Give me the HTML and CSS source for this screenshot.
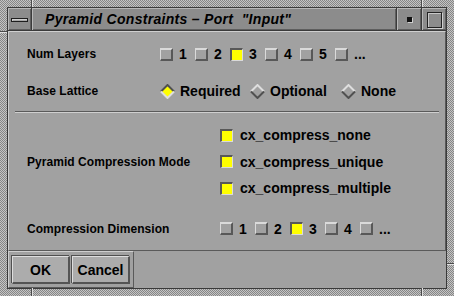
FILE: index.html
```
<!DOCTYPE html>
<html>
<head>
<meta charset="utf-8">
<link rel="stylesheet" href="styles.css">
</head>
<body>
<div class="window">
  <div class="titlebar">
    <div class="tb-menu"><span class="tb-bar"></span></div>
    <div class="tb-title">Pyramid Constraints – Port&nbsp; "Input"</div>
    <div class="tb-min"><span class="tb-dot"></span></div>
    <div class="tb-max"><span class="tb-sq"></span></div>
  </div>
  <div class="client">
    <div class="panel">
      <div class="section one">
        <div class="label">Num Layers</div>
        <div class="checks">
          <span class="ci"><span class="cb"></span><span class="ct">1</span></span>
          <span class="ci"><span class="cb"></span><span class="ct">2</span></span>
          <span class="ci"><span class="cb on"></span><span class="ct">3</span></span>
          <span class="ci"><span class="cb"></span><span class="ct">4</span></span>
          <span class="ci"><span class="cb"></span><span class="ct">5</span></span>
          <span class="ci"><span class="cb"></span><span class="ct">...</span></span>
        </div>
        <div class="label">Base Lattice</div>
        <div class="radios">
          <span class="ri"><svg class="dia" width="15" height="15" viewBox="0 0 15 15"><polygon points="7.5,1.5 13.5,7.5 7.5,13.5 1.5,7.5" fill="#ffff00"/><polyline points="1,7.5 7.5,1 14,7.5" stroke="#505050" stroke-width="2" fill="none"/><polyline points="1,7.5 7.5,14 14,7.5" stroke="#dedede" stroke-width="2" fill="none"/></svg><span class="rt">Required</span></span>
          <span class="ri"><svg class="dia" width="15" height="15" viewBox="0 0 15 15"><polygon points="7.5,1.5 13.5,7.5 7.5,13.5 1.5,7.5" fill="#a1a1a1"/><polyline points="1,7.5 7.5,1 14,7.5" stroke="#dedede" stroke-width="2" fill="none"/><polyline points="1,7.5 7.5,14 14,7.5" stroke="#505050" stroke-width="2" fill="none"/></svg><span class="rt">Optional</span></span>
          <span class="ri"><svg class="dia" width="15" height="15" viewBox="0 0 15 15"><polygon points="7.5,1.5 13.5,7.5 7.5,13.5 1.5,7.5" fill="#a1a1a1"/><polyline points="1,7.5 7.5,1 14,7.5" stroke="#dedede" stroke-width="2" fill="none"/><polyline points="1,7.5 7.5,14 14,7.5" stroke="#505050" stroke-width="2" fill="none"/></svg><span class="rt">None</span></span>
        </div>
      </div>
      <div class="sep"></div>
      <div class="section two">
        <div class="label">Pyramid Compression Mode</div>
        <div class="modes">
          <span class="mi"><span class="cb on"></span><span class="mt">cx_compress_none</span></span>
          <span class="mi"><span class="cb on"></span><span class="mt">cx_compress_unique</span></span>
          <span class="mi"><span class="cb on"></span><span class="mt">cx_compress_multiple</span></span>
        </div>
        <div class="label dim">Compression Dimension</div>
        <div class="checks dim">
          <span class="ci"><span class="cb"></span><span class="ct">1</span></span>
          <span class="ci"><span class="cb"></span><span class="ct">2</span></span>
          <span class="ci"><span class="cb on"></span><span class="ct">3</span></span>
          <span class="ci"><span class="cb"></span><span class="ct">4</span></span>
          <span class="ci"><span class="cb"></span><span class="ct">...</span></span>
        </div>
      </div>
    </div>
    <div class="buttonbar">
      <div class="btnbox">
        <button class="btn">OK</button>
        <button class="btn">Cancel</button>
      </div>
    </div>
  </div>
  <span class="notch nt-l"></span>
  <span class="notch nt-r"></span>
  <span class="notch nb-l"></span>
  <span class="notch nb-r"></span>
  <span class="notch nl-t"></span>
  <span class="notch nr-b"></span>
</div>
</body>
</html>
```
FILE: styles.css
```
* { box-sizing: border-box; }
html, body { margin: 0; padding: 0; }
body {
  width: 454px;
  height: 296px;
  font-family: "Liberation Sans", Arial, sans-serif;
  color: #000;
}
.window {
  position: relative;
  width: 454px;
  height: 296px;
  padding: 7px 7px 8px 7px;
  display: flex;
  flex-direction: column;
  background-color: #a4a4a4;
  background-image: repeating-conic-gradient(#c4c4c4 0 25%, #868686 0 50%);
  background-size: 2px 2px;
}
.titlebar {
  height: 24px;
  display: flex;
  background: #8c8c8c;
  border: 1px solid #3a3a3a;
}
.tb-menu {
  width: 24px;
  border-right: 1px solid #3a3a3a;
  box-shadow: inset 1px 1px 0 #b8b8b8, inset -1px -1px 0 #5e5e5e;
  display: flex;
  align-items: center;
  justify-content: center;
}
.tb-bar {
  width: 17px;
  height: 4px;
  border: 1px solid #1e1e1e;
  background: #a8a8a8;
  box-shadow: inset 1px 1px 0 #d0d0d0;
  margin-top: 1px;
}
.tb-title {
  flex: 1;
  padding-left: 13px;
  font-style: italic;
  font-weight: bold;
  font-size: 14px;
  letter-spacing: 0.3px;
  line-height: 22px;
  box-shadow: inset 1px 1px 0 #b8b8b8, inset -1px -1px 0 #5e5e5e;
  white-space: pre;
}
.tb-min, .tb-max {
  width: 25px;
  border-left: 1px solid #3a3a3a;
  box-shadow: inset 1px 1px 0 #b8b8b8, inset -1px -1px 0 #5e5e5e;
  display: flex;
  align-items: center;
  justify-content: center;
}
.tb-dot {
  width: 5px;
  height: 5px;
  background: #111;
  box-shadow: 1px 1px 0 #cfcfcf;
  margin-top: 1px;
}
.tb-sq {
  width: 15px;
  height: 16px;
  border: 1px solid #222;
  box-shadow: inset 1px 1px 0 #c8c8c8, 1px 1px 0 #cfcfcf;
  background: #8c8c8c;
  margin-top: 1px;
}
.client {
  flex: 1;
  display: flex;
  flex-direction: column;
  border: 1px solid #3a3a3a;
  border-top: none;
  background: #a1a1a1;
}
.panel {
  height: 220px;
  border-style: solid;
  border-width: 1px;
  border-color: #cfcfcf #5a5a5a #5a5a5a #cfcfcf;
}
.section {
  display: grid;
  padding-left: 18px;
  align-items: center;
}
.section.one {
  grid-template-columns: 133px auto;
  grid-template-rows: 24px 24px;
  row-gap: 13px;
  padding-top: 10px;
}
.section.two {
  grid-template-columns: 193px auto;
  padding-top: 9px;
}
.label {
  font-size: 12px;
  font-weight: bold;
  letter-spacing: 0.05px;
}
.label.dim, .checks.dim { margin-top: 15px; height: 24px; display: flex; align-items: center; }
.checks { display: flex; align-items: center; }
.ci {
  display: flex;
  align-items: center;
  width: 35px;
}
.cb {
  display: inline-block;
  width: 13px;
  height: 13px;
  border-style: solid;
  border-width: 2px 2px 2px 1px;
  border-color: #dadada #585858 #585858 #dadada;
  background: #a1a1a1;
  flex: none;
}
.cb.on {
  border-width: 2px 1px 1px 2px;
  border-color: #585858 #dadada #dadada #585858;
  background: #ffff00;
}
.ct {
  margin-left: 6px;
  font-size: 14px;
  font-weight: bold;
}
.radios {
  display: grid;
  grid-template-columns: 90px 91px auto;
  align-items: center;
}
.ri { display: flex; align-items: center; }
.dia { flex: none; }
.rt {
  margin-left: 5px;
  font-size: 14px;
  font-weight: bold;
}
.sep {
  height: 2px;
  margin: 8px 6px 0 6px;
  border-top: 1px solid #5a5a5a;
  border-bottom: 1px solid #cfcfcf;
}
.modes {
  display: flex;
  flex-direction: column;
}
.mi {
  height: 26.5px;
  display: flex;
  align-items: center;
}
.mt {
  margin-left: 7px;
  font-size: 14px;
  font-weight: bold;
}
.buttonbar {
  flex: 1;
  display: flex;
}
.btnbox {
  width: 126px;
  display: flex;
  gap: 2px;
  padding: 4px 3px 3px 3px;
  border-style: solid;
  border-width: 1px;
  border-color: #cfcfcf #5a5a5a #5a5a5a #cfcfcf;
}
.btn {
  width: 58px;
  height: 28px;
  margin: 0;
  padding: 0;
  font-family: "Liberation Sans", Arial, sans-serif;
  font-size: 14px;
  font-weight: bold;
  color: #000;
  background: #acacac;
  border-style: solid;
  border-width: 1px 2px 2px 1px;
  border-color: #dedede #545454 #545454 #dedede;
  box-shadow: -1px -1px 0 #505050;
}
.notch {
  position: absolute;
  background: #4a4a4a;
  box-shadow: 1px 0 0 #e0e0e0;
}
.nt-l { left: 31px; top: 0; width: 1px; height: 7px; }
.nt-r { left: 421px; top: 0; width: 1px; height: 7px; }
.nb-l { left: 31px; bottom: 0; width: 1px; height: 8px; }
.nb-r { left: 421px; bottom: 0; width: 1px; height: 8px; }
.nl-t { left: 0; top: 31px; width: 7px; height: 1px; box-shadow: 0 1px 0 #e0e0e0; }
.nr-b { right: 0; top: 263px; width: 7px; height: 1px; box-shadow: 0 1px 0 #e0e0e0; }
```
